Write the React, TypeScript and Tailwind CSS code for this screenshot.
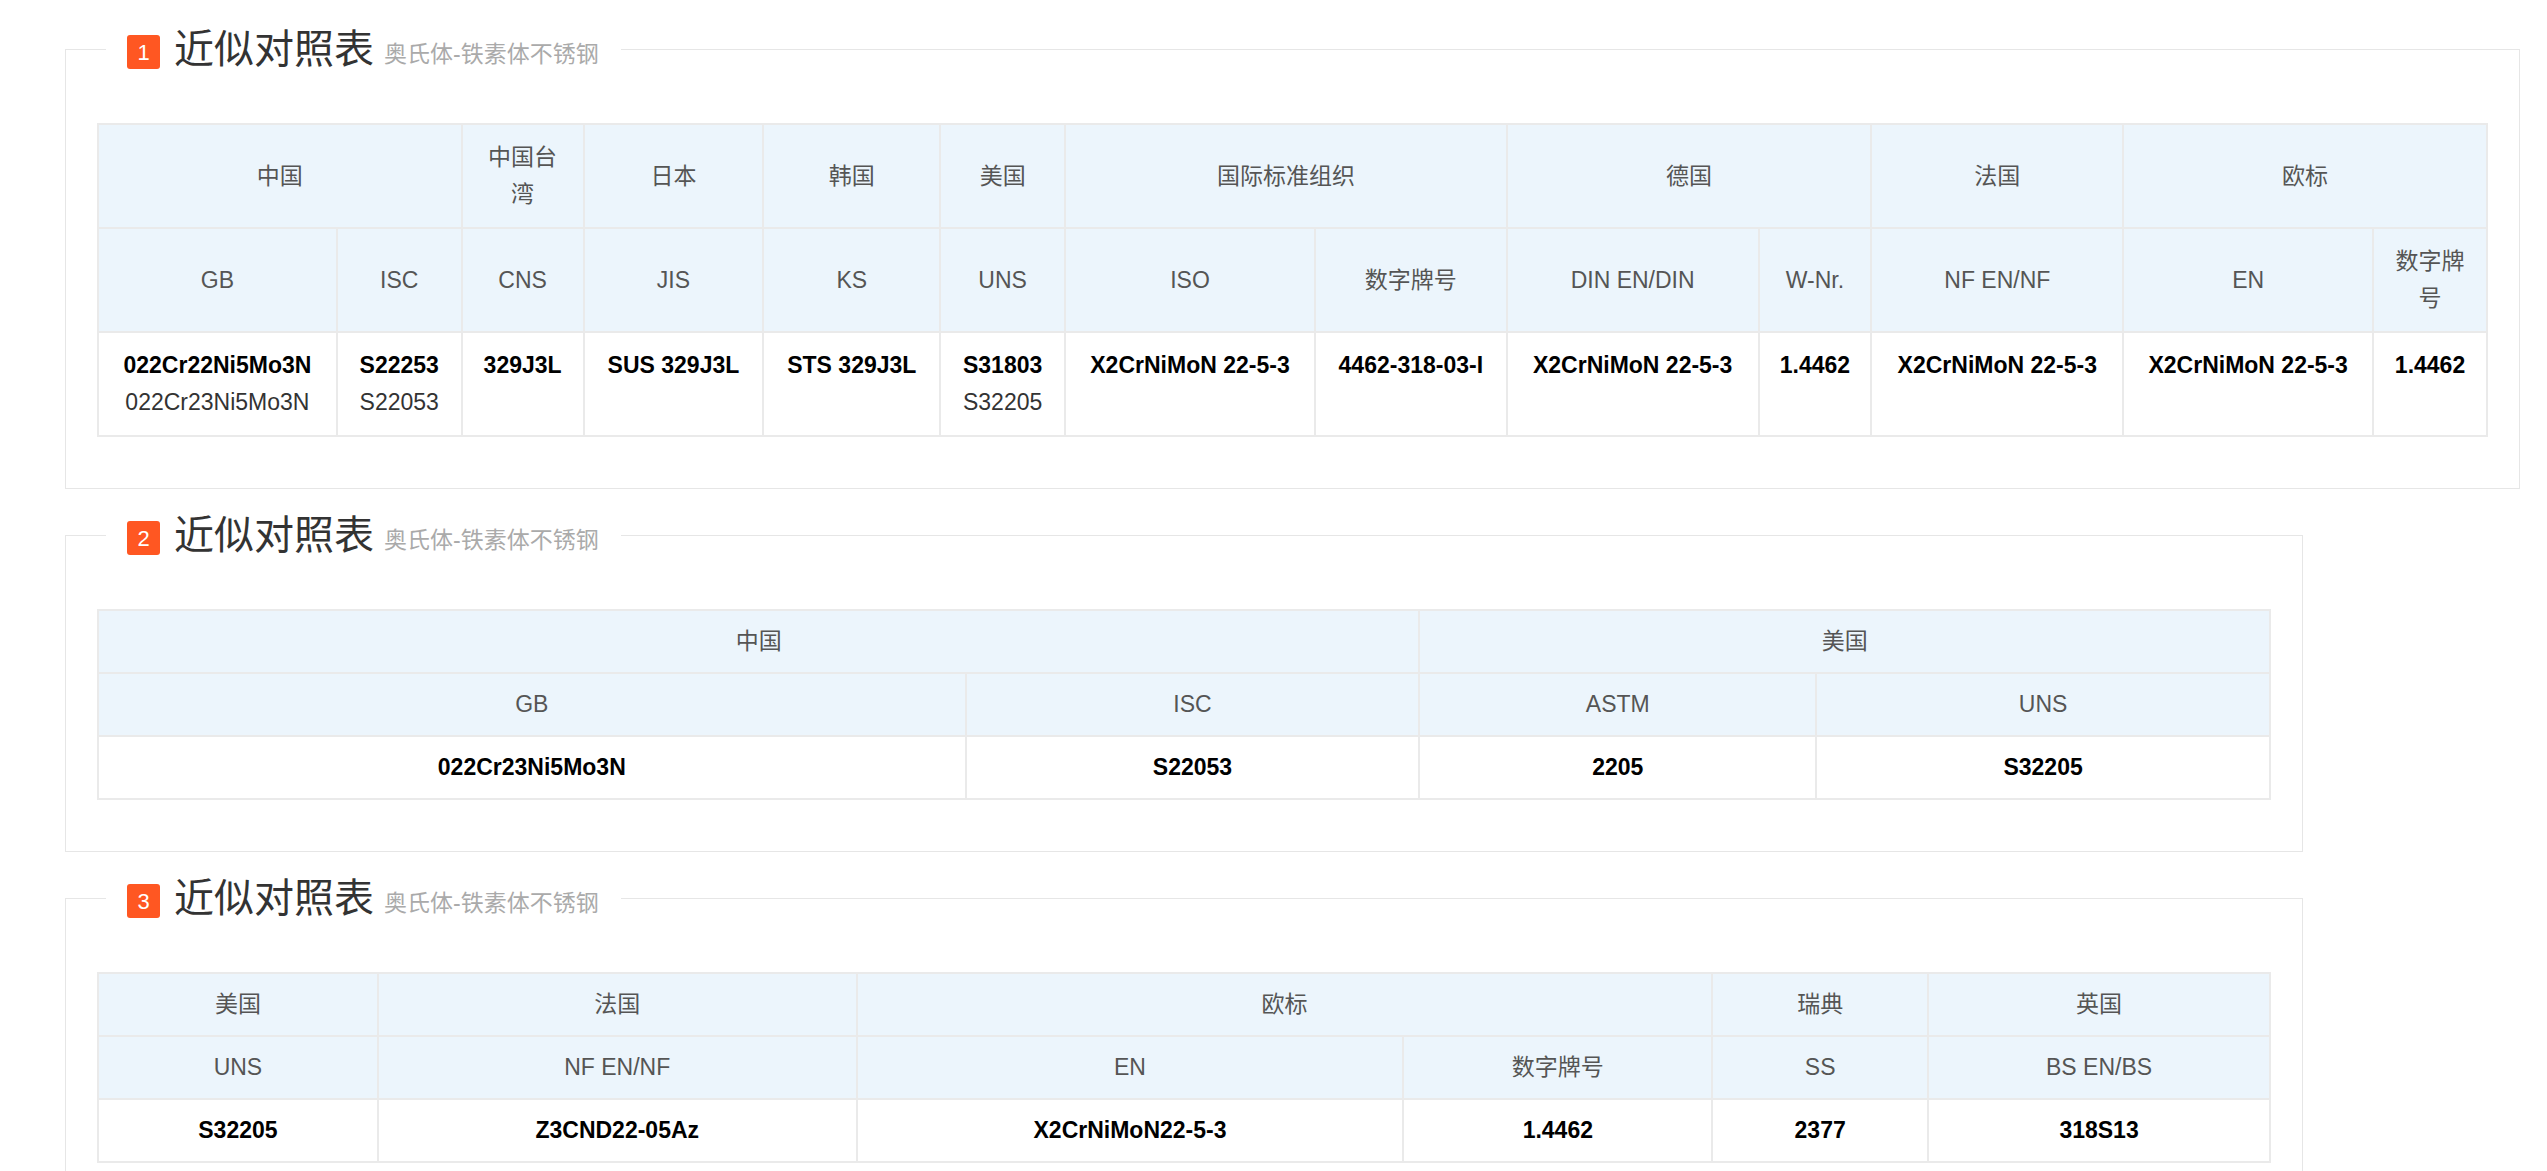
type Cell = { t: string; sub?: string; span?: number };

function Section({ n, children, w }: { n: number; children: React.ReactNode; w: string }) {
  return (
    <fieldset className={`border border-[#e6e6e6] ml-[65px] px-[31px] pb-[51px] mt-[24px] first:mt-0 ${w}`}>
      <legend className="ml-[9px] pl-[21px] pr-[22px] flex items-end h-[44px]">
        <span className="w-[33px] h-[34px] mb-[2px] rounded-[3px] bg-[#ff5722] text-white text-[22px] flex items-center justify-center">{n}</span>
        <span className="ml-[14px] text-[40px] leading-[44px] text-[#333]">近似对照表</span>
        <span className="ml-[10px] text-[23px] leading-[34px] text-[#aaa]">奥氏体-铁素体不锈钢</span>
      </legend>
      <div className="mt-[52px]">{children}</div>
    </fieldset>
  );
}

function Table({ widths, rows, py, data }: { widths: number[]; rows: Cell[][]; py: string; data: Cell[] }) {
  return (
    <table className="border-collapse table-fixed text-[23px] leading-[37px]">
      <colgroup>
        {widths.map((w, i) => (
          <col key={i} style={{ width: w }} />
        ))}
      </colgroup>
      <tbody>
        {rows.map((r, i) => (
          <tr key={i} className="bg-[#ecf5fc] text-[#555]">
            {r.map((c, j) => (
              <td key={j} colSpan={c.span} className={`border-2 border-[#eaeaea] text-center align-middle px-[18px] ${py}`}>
                {c.t}
              </td>
            ))}
          </tr>
        ))}
        <tr className="bg-white">
          {data.map((c, j) => (
            <td key={j} className={`border-2 border-[#eaeaea] text-center align-top px-[4px] ${py}`}>
              <div className="font-bold text-black whitespace-nowrap">{c.t}</div>
              {c.sub && <div className="text-[#333]">{c.sub}</div>}
            </td>
          ))}
        </tr>
      </tbody>
    </table>
  );
}

export default function App() {
  return (
    <div className="bg-white min-h-[1171px] pt-[27px] font-[Liberation_Sans,Noto_Sans_CJK_SC,sans-serif]">
      <Section n={1} w="w-[2455px]">
        <Table
          py="py-[14px]"
          widths={[239, 125, 122, 180, 177, 125, 250, 192, 252, 113, 252, 250, 114]}
          rows={[
            [
              { t: "中国", span: 2 },
              { t: "中国台湾" },
              { t: "日本" },
              { t: "韩国" },
              { t: "美国" },
              { t: "国际标准组织", span: 2 },
              { t: "德国", span: 2 },
              { t: "法国" },
              { t: "欧标", span: 2 },
            ],
            [
              { t: "GB" },
              { t: "ISC" },
              { t: "CNS" },
              { t: "JIS" },
              { t: "KS" },
              { t: "UNS" },
              { t: "ISO" },
              { t: "数字牌号" },
              { t: "DIN EN/DIN" },
              { t: "W-Nr." },
              { t: "NF EN/NF" },
              { t: "EN" },
              { t: "数字牌号" },
            ],
          ]}
          data={[
            { t: "022Cr22Ni5Mo3N", sub: "022Cr23Ni5Mo3N" },
            { t: "S22253", sub: "S22053" },
            { t: "329J3L" },
            { t: "SUS 329J3L" },
            { t: "STS 329J3L" },
            { t: "S31803", sub: "S32205" },
            { t: "X2CrNiMoN 22-5-3" },
            { t: "4462-318-03-I" },
            { t: "X2CrNiMoN 22-5-3" },
            { t: "1.4462" },
            { t: "X2CrNiMoN 22-5-3" },
            { t: "X2CrNiMoN 22-5-3" },
            { t: "1.4462" },
          ]}
        />
      </Section>
      <Section n={2} w="w-[2238px]">
        <Table
          py="py-[12px]"
          widths={[868, 454, 397, 454]}
          rows={[
            [
              { t: "中国", span: 2 },
              { t: "美国", span: 2 },
            ],
            [{ t: "GB" }, { t: "ISC" }, { t: "ASTM" }, { t: "UNS" }],
          ]}
          data={[{ t: "022Cr23Ni5Mo3N" }, { t: "S22053" }, { t: "2205" }, { t: "S32205" }]}
        />
      </Section>
      <Section n={3} w="w-[2238px]">
        <Table
          py="py-[12px]"
          widths={[280, 479, 547, 309, 216, 342]}
          rows={[
            [{ t: "美国" }, { t: "法国" }, { t: "欧标", span: 2 }, { t: "瑞典" }, { t: "英国" }],
            [{ t: "UNS" }, { t: "NF EN/NF" }, { t: "EN" }, { t: "数字牌号" }, { t: "SS" }, { t: "BS EN/BS" }],
          ]}
          data={[{ t: "S32205" }, { t: "Z3CND22-05Az" }, { t: "X2CrNiMoN22-5-3" }, { t: "1.4462" }, { t: "2377" }, { t: "318S13" }]}
        />
      </Section>
    </div>
  );
}
